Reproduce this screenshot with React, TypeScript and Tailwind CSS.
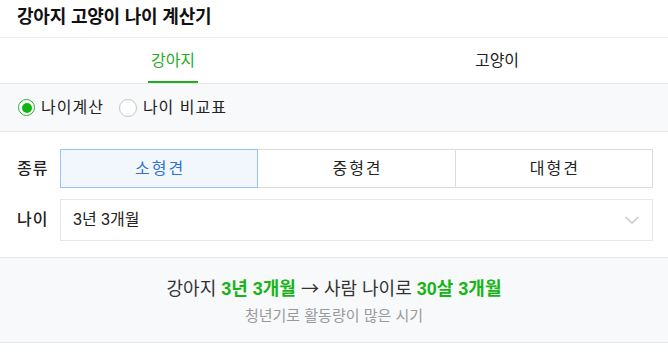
import React from "react";

export default function App() {
  const font = { fontFamily: '"Liberation Sans", "Noto Sans CJK KR", sans-serif' };
  return (
    <div className="w-[668px] h-[356px] bg-white text-[#222] overflow-hidden" style={font}>
      <div className="h-[38px] border-b border-[#ececec] flex items-center pl-[17px]">
        <h1 className="text-[18px] font-bold leading-none text-[#111] -mt-[4px] tracking-[-0.2px]">강아지 고양이 나이 계산기</h1>
      </div>
      <div className="flex h-[46px] border-b border-[#e8e8e8] pl-[11px] pr-[9px]">
        <div className="flex-1 flex justify-center">
          <div className="relative h-full flex items-center text-[16px] text-[#1fae1f]">
            강아지
            <div className="absolute left-[-3px] right-[-3px] bottom-0 h-[2px] bg-[#1fae1f]" />
          </div>
        </div>
        <div className="flex-1 flex justify-center items-center text-[16px] text-[#222]">고양이</div>
      </div>
      <div className="h-[48px] bg-[#f8f9fb] border-b border-[#e8e8e8] flex items-center pl-[18px] gap-[12px] text-[16px] tracking-[1px]">
        <label className="flex items-center gap-[6px]">
          <span className="w-[17px] h-[17px] rounded-full border-[1.5px] border-[#1fb51f] bg-white flex items-center justify-center">
            <span className="w-[10px] h-[10px] rounded-full bg-[#13b313]" />
          </span>
          <span>나이계산</span>
        </label>
        <label className="flex items-center gap-[6px] ml-[3px]">
          <span className="w-[18px] h-[18px] rounded-full border border-[#c4c4c4] bg-white" />
          <span>나이 비교표</span>
        </label>
      </div>
      <div className="pl-[17px] pr-[15px] pt-[17px]">
        <div className="flex items-center">
          <div className="w-[43px] text-[16px] font-medium text-[#222] tracking-[1px]">종류</div>
          <div className="flex-1 flex h-[39px] tracking-[2px]">
            <div className="flex-1 flex items-center justify-center pl-[2px] border border-[#93c4f6] bg-[#f2f7fe] text-[#2f72cf] text-[16px]">소형견</div>
            <div className="flex-1 flex items-center justify-center pl-[2px] border-y border-r border-[#dcdcdc] text-[16px]">중형견</div>
            <div className="flex-1 flex items-center justify-center pl-[2px] border-y border-r border-[#dcdcdc] text-[16px]">대형견</div>
          </div>
        </div>
        <div className="flex items-center mt-[11px]">
          <div className="w-[43px] text-[16px] font-medium text-[#222] tracking-[1px]">나이</div>
          <div className="flex-1 h-[42px] border border-[#e6e6e6] flex items-center justify-between pl-[12px] pr-[12px] text-[16px]">
            <span>3년 3개월</span>
            <svg width="16" height="10" viewBox="0 0 16 10" fill="none">
              <path d="M1.5 2 L8 8 L14.5 2" stroke="#c8c8c8" strokeWidth="1.5" />
            </svg>
          </div>
        </div>
      </div>
      <div className="mt-[16px] h-[86px] bg-[#f8f9fb] border-y border-[#e6eaee] flex flex-col items-center justify-center">
        <div className="text-[18px] text-[#333] leading-[22px] mt-[4px]">
          강아지 <b className="text-[#17b417]">3년 3개월</b> <span style={{ fontFamily: '"Noto Sans CJK KR", sans-serif' }}>→</span> 사람 나이로 <b className="text-[#17b417]">30살 3개월</b>
        </div>
        <div className="text-[15px] text-[#9a9a9a] mt-[5px]">청년기로 활동량이 많은 시기</div>
      </div>
    </div>
  );
}
